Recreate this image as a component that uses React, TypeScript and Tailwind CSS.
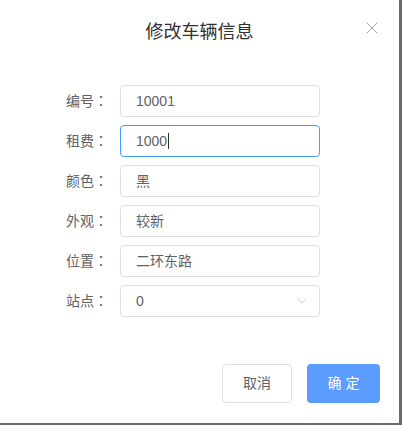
import { X, ChevronDown } from "lucide-react";

const rows = [
    { label: "编号", value: "10001" },
    { label: "租费", value: "1000", focus: true },
    { label: "颜色", value: "黑" },
    { label: "外观", value: "较新" },
    { label: "位置", value: "二环东路" },
    { label: "站点", value: "0", select: true },
];

export default function App() {
    return (
        <div
            className="w-[402px] h-[425px] bg-[#6b6b6b] overflow-hidden"
            style={{ fontFamily: '"Liberation Sans", "Noto Sans CJK SC", sans-serif' }}
        >
            <div className="w-[399px] h-[423px] bg-white flex flex-col">
                {/* Header */}
                <div className="relative pt-5 pb-[10px] px-5">
                    <h3 className="text-center text-[18px] leading-6 text-[#303133]">修改车辆信息</h3>
                    <X className="absolute top-[18px] right-[17px] w-5 h-5 text-[#909399]" strokeWidth={1} />
                </div>

                {/* Form */}
                <div className="pt-[31px] pl-5 pr-5 flex flex-col gap-2 flex-1">
                    {rows.map((r) => (
                        <div key={r.label} className="flex items-center h-8">
                            <div className="w-[100px] pr-3 text-right text-[14px] text-[#606266]">
                                {r.label}
                                <span style={{ fontFamily: '"Noto Sans CJK TC", sans-serif' }}>：</span>
                            </div>
                            <div
                                className={`w-[200px] h-8 rounded border px-[15px] flex items-center text-[14px] text-[#606266] ${r.focus ? "border-[#409eff]" : "border-[#dcdfe6]"}`}
                            >
                                <span>{r.value}</span>
                                {r.focus && <span className="w-px h-[16px] bg-[#303133] ml-px" />}
                                {r.select && (
                                    <ChevronDown className="ml-auto -mr-[6px] w-[16px] h-[16px] text-[#c0c4cc]" strokeWidth={1.2} />
                                )}
                            </div>
                        </div>
                    ))}
                </div>

                {/* Footer */}
                <div className="flex justify-end gap-[15px] pt-[10px] pb-5 pr-[19px]">
                    <button className="w-[70px] h-[39px] rounded border border-[#dcdfe6] bg-white text-[14px] text-[#606266]">取消</button>
                    <button className="w-[73px] h-[39px] rounded bg-[#5a9cff] text-[14px] text-white">确 定</button>
                </div>
            </div>
        </div>
    );
}
